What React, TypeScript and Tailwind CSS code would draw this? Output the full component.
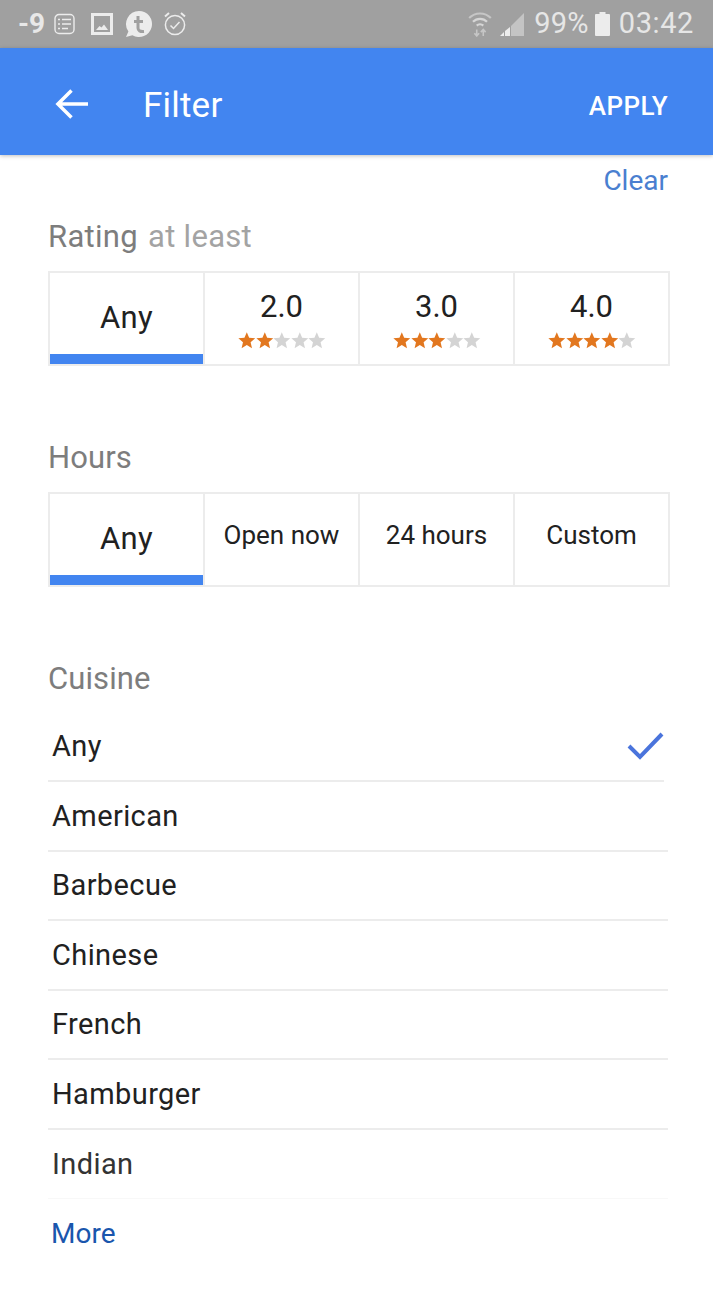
const ratings = [
  { label: "2.0", filled: 2 },
  { label: "3.0", filled: 3 },
  { label: "4.0", filled: 4 },
];
const hours = ["Open now", "24 hours", "Custom"];
const cuisines = ["American", "Barbecue", "Chinese", "French", "Hamburger"];

function Star({ on }: { on: boolean }) {
  return (
    <svg width="17.6" height="17" viewBox="0 0 24 23" preserveAspectRatio="none" className={on ? "fill-[#e2771f]" : "fill-[#d4d4d4]"}>
      <path d="M12 .5l3.200 7.300 8.300.7-6.300 5.400 1.900 8.100L12 17.700 4.900 22l1.900-8.100L.5 8.500l8.300-.7z" />
    </svg>
  );
}

function AnyCell() {
  return (
    <div className="flex flex-col border-r-2 border-[#ececec]">
      <div className="flex flex-1 items-center justify-center pt-[10px] text-[31px] tracking-[0.3px] text-[#212121]">Any</div>
      <div className="h-[10px] bg-[#4285f0]" />
    </div>
  );
}

function StatusBar() {
  return (
    <div className="flex h-12 items-center justify-between bg-[#a0a0a0] pl-[18px] pr-[19px] text-[#ececec]">
      <div className="flex items-center">
        <span className="text-[28px] font-bold text-[#e8e8e8]">-9</span>
        <svg width="22" height="22" viewBox="0 0 22 22" className="ml-[9px]" fill="none" stroke="currentColor">
          <rect x="1" y="1.500" width="19" height="19" rx="4" strokeWidth="1.400" />
          <path d="M8 6.500h9M8 11h9M8 15.500h6" strokeWidth="1.600" />
          <path d="M4 6.500h2M4 11h2M4 15.500h2" strokeWidth="1.600" />
        </svg>
        <svg width="23" height="24" viewBox="0 0 23 24" className="ml-[15px]">
          <path fill="currentColor" fillRule="evenodd" d="M0 1h22v22H0zM3 4v16h16V4z" />
          <path fill="currentColor" d="M5 18l3.500-4 2 1.500 2.500-3 4 5.500z" />
        </svg>
        <svg width="28" height="28" viewBox="0 0 28 28" className="ml-[11px]">
          <path fill="currentColor" d="M14 1a13 13 0 1 1-6.600 24.200L1 27l2.400-5.600A13 13 0 0 1 14 1z" />
          <path fill="none" stroke="#a0a0a0" strokeWidth="3" d="M13 6v12q0 4 6 3.500M9 11.500h9" />
        </svg>
        <svg width="24" height="26" viewBox="0 0 24 26" className="ml-[10px]" fill="none" stroke="currentColor">
          <circle cx="12" cy="14" r="9.600" strokeWidth="1.500" />
          <path d="M7.500 14.500l3 3 6-6.500" strokeWidth="1.500" />
          <path d="M2 5.500l4-3.500M22 5.500l-4-3.500" strokeWidth="2" />
        </svg>
      </div>
      <div className="flex items-center">
        <svg width="24" height="26" viewBox="0 0 22 24" fill="none" stroke="#d6d6d6">
          <path d="M1 6.500a14 14 0 0 1 20 0" strokeWidth="2" opacity=".7" />
          <path d="M4.500 10a9 9 0 0 1 13 0" strokeWidth="2" />
          <path d="M8 13.500a4.200 4.200 0 0 1 6 0" strokeWidth="2" />
          <path d="M8 17v6M5.800 20.500L8 23l2.200-2.500M14 23v-6M11.800 19.500L14 17l2.200 2.500" strokeWidth="1.500" opacity=".7" />
        </svg>
        <svg width="25" height="25" viewBox="0 0 25 25" className="ml-[8px]">
          <path fill="#c4c4c4" d="M24 1v23H11V14z" />
          <path fill="#ececec" d="M10 15v9H5v-5zM4 20v4H0z" />
        </svg>
        <span className="ml-[9px] text-[29px] tracking-[0.2px] text-[#e6e6e6]">99%</span>
        <svg width="15" height="24" viewBox="0 0 15 24" className="ml-[6px]">
          <path fill="#ececec" d="M4.500 0h6v2H14a1 1 0 0 1 1 1v20a1 1 0 0 1-1 1H1a1 1 0 0 1-1-1V3a1 1 0 0 1 1-1h3.500z" />
        </svg>
        <span className="ml-[9px] text-[29px] tracking-[0.6px] text-[#e6e6e6]">03:42</span>
      </div>
    </div>
  );
}

export default function App() {
  return (
    <div className="h-[1307px] w-[713px] overflow-hidden bg-white font-['Roboto',sans-serif]">
      <StatusBar />
      <div className="relative flex h-[107px] items-center bg-[#4285f0] pl-[55px] pr-[45px] text-white shadow-[0_1px_4px_rgba(0,0,0,0.25)]">
        <svg width="33" height="32" viewBox="0 0 34 32" fill="none" stroke="white" strokeWidth="3.600" className="mt-[4px]">
          <path d="M34 16H3M17 2L3 16l14 14" />
        </svg>
        <span className="ml-[55px] mt-[10px] text-[35px] tracking-[0.2px]">Filter</span>
        <span className="ml-auto mt-[10px] text-[26px] font-medium tracking-[0.4px]">APPLY</span>
      </div>

      <div className="pl-[48px] pr-[43px]">
        <div className="mr-[2px] mt-[8px] text-right text-[28px] leading-[36px] text-[#4a7fd0]">Clear</div>

        <div className="mt-[19px] text-[31px] leading-[38px] tracking-[0.3px] text-[#7d7d7d]">
          Rating <span className="ml-[2px] text-[#a3a3a3]">at least</span>
        </div>
        <div className="mt-[15px] grid h-[95px] grid-cols-[155px_155px_155px_1fr] border-2 border-[#ececec]">
          <AnyCell />
          {ratings.map((r, i) => (
            <div key={r.label} className={`flex flex-col items-center pt-[15px] ${i < 2 ? "border-r-2 border-[#ececec]" : ""}`}>
              <div className="text-[31px] leading-[38px] text-[#212121]">{r.label}</div>
              <div className="ml-[1px] mt-[6px] flex">
                {[0, 1, 2, 3, 4].map((n) => (
                  <Star key={n} on={n < r.filled} />
                ))}
              </div>
            </div>
          ))}
        </div>

        <div className="mt-[73px] text-[31px] leading-[38px] tracking-[0.1px] text-[#7d7d7d]">Hours</div>
        <div className="mt-[15px] grid h-[95px] grid-cols-[155px_155px_155px_1fr] border-2 border-[#ececec]">
          <AnyCell />
          {hours.map((h, i) => (
            <div key={h} className={`flex items-center justify-center pb-[9px] text-[26px] text-[#212121] ${i < 2 ? "border-r-2 border-[#ececec]" : ""}`}>
              {h}
            </div>
          ))}
        </div>

        <div className="mt-[73px] text-[31px] leading-[38px] tracking-[0.1px] text-[#7d7d7d]">Cuisine</div>
        <div className="mr-[2px] mt-[15px]">
          <div className="mr-[4px] flex h-[69px] items-center justify-between border-b-2 border-[#ececec] pl-[4px] text-[29px] tracking-[0.4px] text-[#212121]">
            Any
            <svg width="38" height="30" viewBox="0 0 38 30" fill="none" stroke="#4a74dc" strokeWidth="4" className="mr-[-1px]">
              <path d="M2 14l11 11L35 2" />
            </svg>
          </div>
          {cuisines.map((c) => (
            <div key={c} className="flex h-[69.5px] items-center border-b-2 border-[#ececec] pl-[4px] pt-[1px] text-[29px] tracking-[0.4px] text-[#212121]">
              {c}
            </div>
          ))}
          <div className="flex h-[69.5px] items-center border-b border-[#f8f8f8] pl-[4px] pt-[1px] text-[29px] tracking-[0.4px] text-[#333333]">Indian</div>
          <div className="mt-[15px] pl-[3px] text-[28px] leading-[40px] text-[#1a56ad]">More</div>
        </div>
      </div>
    </div>
  );
}
